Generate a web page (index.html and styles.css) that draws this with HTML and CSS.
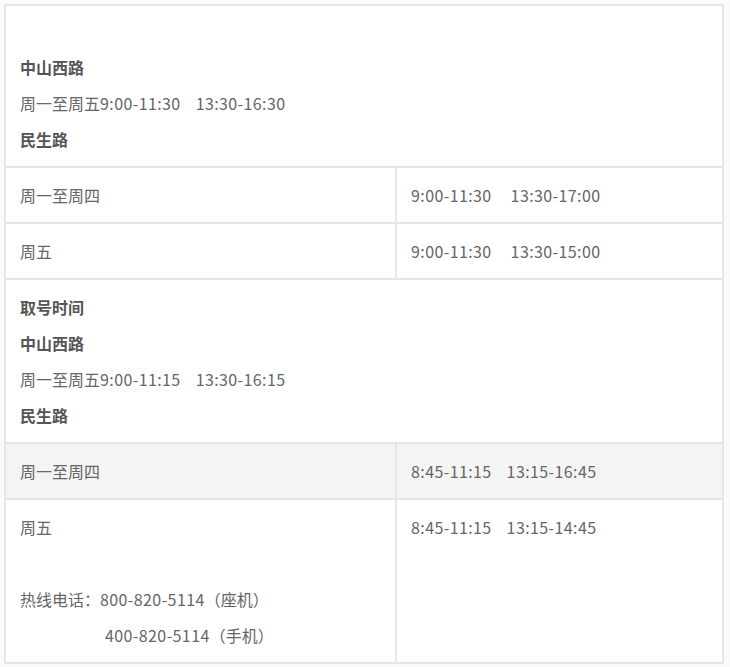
FILE: index.html
```html
<!DOCTYPE html>
<html lang="zh-CN">
<head>
<meta charset="utf-8">
<title>办公时间</title>
<link rel="stylesheet" href="styles.css">
</head>
<body>
<table class="hours">
  <colgroup><col class="col-a"><col class="col-b"></colgroup>
  <tr class="first">
    <td colspan="2">
      <p class="line">&nbsp;</p>
      <p class="line strong">中山西路</p>
      <p class="line">周一至周五<span class="t">9:00-11:30</span><span class="gap-s"></span><span class="t">13:30-16:30</span></p>
      <p class="line strong">民生路</p>
    </td>
  </tr>
  <tr>
    <td><p class="line">周一至周四</p></td>
    <td><p class="line"><span class="t">9:00-11:30</span><span class="gap-l"></span><span class="t">13:30-17:00</span></p></td>
  </tr>
  <tr>
    <td><p class="line">周五</p></td>
    <td><p class="line"><span class="t">9:00-11:30</span><span class="gap-l"></span><span class="t">13:30-15:00</span></p></td>
  </tr>
  <tr>
    <td colspan="2">
      <p class="line strong">取号时间</p>
      <p class="line strong">中山西路</p>
      <p class="line">周一至周五<span class="t">9:00-11:15</span><span class="gap-s"></span><span class="t">13:30-16:15</span></p>
      <p class="line strong">民生路</p>
    </td>
  </tr>
  <tr class="shaded">
    <td><p class="line">周一至周四</p></td>
    <td><p class="line"><span class="t">8:45-11:15</span><span class="gap-s"></span><span class="t">13:15-16:45</span></p></td>
  </tr>
  <tr>
    <td>
      <p class="line">周五</p>
      <p class="line">&nbsp;</p>
      <p class="line">热线电话：<span class="t">800-820-5114</span>（座机）</p>
      <p class="line indent"><span class="t">400-820-5114</span>（手机）</p>
    </td>
    <td><p class="line"><span class="t">8:45-11:15</span><span class="gap-s"></span><span class="t">13:15-14:45</span></p></td>
  </tr>
</table>
</body>
</html>
```

FILE: styles.css
```css
html, body {
  background: #fafafa;
}
body {
  margin: 4px;
  font-family: "Noto Sans CJK SC", "Noto Sans", sans-serif;
  font-size: 16px;
  color: #666;
}
.hours {
  width: 720px;
  border-collapse: separate;
  border-spacing: 0;
  border: 1px solid #e6e6e6;
  background: #fff;
  table-layout: fixed;
}
.col-a { width: 391px; }
.hours td {
  border: 1px solid #e6e6e6;
  padding: 9px 15px 9px 14px;
  vertical-align: top;
}
.first td {
  padding-top: 7px;
}
.shaded td {
  background: #f4f4f4;
}
.line {
  margin: 0;
  line-height: 36px;
  white-space: nowrap;
}
.t {
  letter-spacing: 0.4px;
}
.strong {
  font-weight: bold;
  color: #555;
}
.indent {
  padding-left: 85px;
}
.gap-s {
  display: inline-block;
  width: 15px;
}
.gap-l {
  display: inline-block;
  width: 19px;
}
```
